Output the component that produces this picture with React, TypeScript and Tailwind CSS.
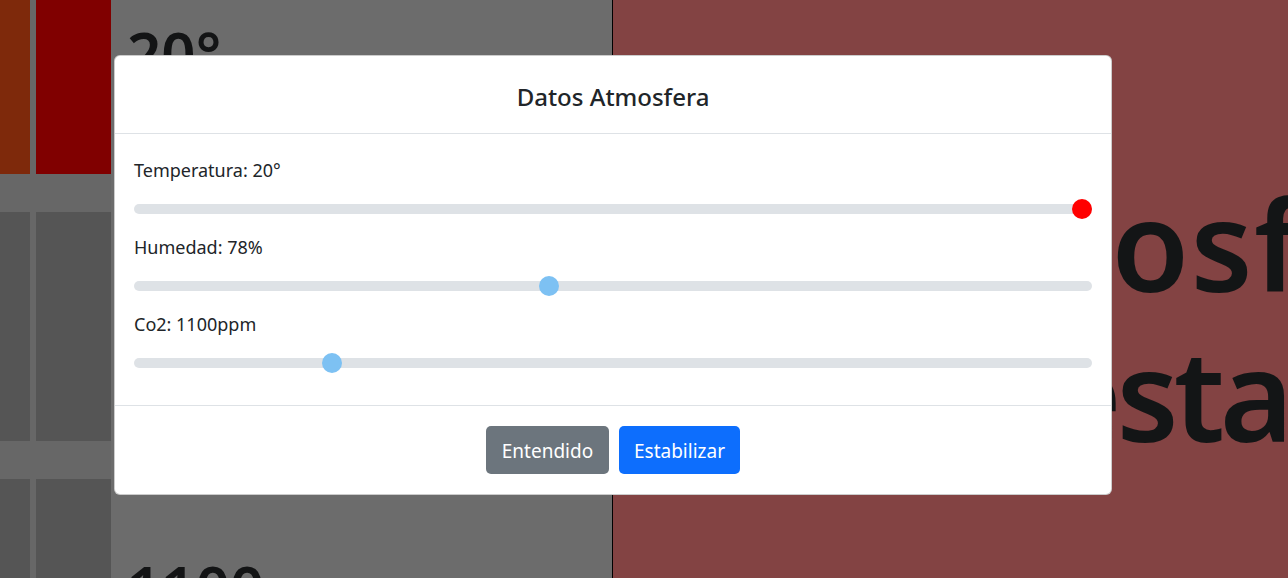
import React from 'react';

const readings = [
  { label: 'Temperatura: 20°', value: 1, thumb: 'bg-[#ff0000]' },
  { label: 'Humedad: 78%', value: 0.432, thumb: 'bg-[#7dc1f3]' },
  { label: 'Co2: 1100ppm', value: 0.2, thumb: 'bg-[#7dc1f3]' },
];

// slider track is 958px wide, thumb 20px
const TRACK = 958;
const THUMB = 20;

function Slider({ value, thumb }: { value: number; thumb: string }) {
  return (
    <div className="relative mt-[22px] h-[10px] rounded-full bg-[#dee2e6]">
      <span
        className={`absolute top-1/2 h-5 w-5 -translate-y-1/2 rounded-full ${thumb}`}
        style={{ left: Math.round(value * (TRACK - THUMB)) }}
      />
    </div>
  );
}

export default function App() {
  return (
    <div className="relative flex h-[578px] w-[1288px] overflow-hidden bg-[#6c6c6c] font-['Noto_Sans','Open_Sans',sans-serif] text-[#212529]">
      {/* Tiles */}
      <div className="grid w-[111px] shrink-0 grid-cols-[30px_75px] grid-rows-[174px_229px_229px] gap-x-[6px] gap-y-[38px] bg-[#676767]">
        <div className="bg-[#7e290b]" />
        <div className="bg-[#800000]" />
        <div className="bg-[#555555]" />
        <div className="bg-[#555555]" />
        <div className="bg-[#555555]" />
        <div className="bg-[#555555]" />
      </div>

      {/* Readings column */}
      <div className="flex w-[502px] shrink-0 flex-col border-r border-black bg-[#6c6c6c] pl-[16px] text-[#131415]">
        <span className="pt-[23px] text-[60px] font-semibold leading-none">20°</span>
        <span className="mt-[474px] text-[60px] font-semibold leading-none">1100</span>
      </div>

      {/* Status panel */}
      <div className="flex-1 overflow-hidden whitespace-nowrap bg-[#834343] text-[126px] font-semibold leading-[150px] text-[#131516]">
        <p className="ml-[238px] mt-[168px] tracking-[0.01em]">Atmosfera</p>
        <p className="ml-[318px] tracking-[-0.04em]">Inestable</p>
      </div>

      {/* Modal */}
      <div className="absolute left-[114px] top-[55px] flex w-[998px] flex-col rounded-[6px] border border-black/20 bg-white">
        <div className="flex h-[78px] items-center justify-center border-b border-[#dee2e6] pt-[4px]">
          <h5 className="text-[24px] font-medium">Datos Atmosfera</h5>
        </div>
        <div className="flex h-[271px] flex-col gap-[21px] px-[19px] pt-[24px]">
          {readings.map((r) => (
            <div key={r.label}>
              <p className="h-6 text-[18px] leading-6">{r.label}</p>
              <Slider value={r.value} thumb={r.thumb} />
            </div>
          ))}
        </div>
        <div className="flex h-[89px] items-center justify-center gap-[10px] border-t border-[#dee2e6]">
          <button className="h-12 w-[123px] rounded-[5px] bg-[#6c757d] pt-[2px] text-[19px] text-white">Entendido</button>
          <button className="h-12 w-[121px] rounded-[5px] bg-[#0d6efd] pt-[2px] text-[19px] text-white">Estabilizar</button>
        </div>
      </div>
    </div>
  );
}
